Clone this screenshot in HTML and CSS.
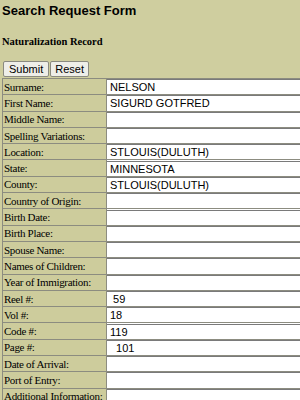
FILE: index.html
```
<!DOCTYPE html>
<html lang="en">
<head>
    <meta charset="UTF-8">
    <title>Search Request Form</title>
    <link rel="stylesheet" href="styles.css">
</head>
<body>
    <h1 class="title">Search Request Form</h1>
    <h2 class="subtitle">Naturalization Record</h2>

    <form class="request-form">
        <div class="buttons">
            <button type="submit">Submit</button>
            <button type="reset">Reset</button>
        </div>
        <table class="fields">
            <tr><td class="label">Surname:</td><td class="value"><input type="text" value="NELSON"></td></tr>
            <tr><td class="label">First Name:</td><td class="value"><input type="text" value="SIGURD GOTFRED"></td></tr>
            <tr><td class="label">Middle Name:</td><td class="value"><input type="text"></td></tr>
            <tr><td class="label">Spelling Variations:</td><td class="value"><input type="text"></td></tr>
            <tr><td class="label">Location:</td><td class="value"><input type="text" value="STLOUIS(DULUTH)"></td></tr>
            <tr><td class="label">State:</td><td class="value"><input type="text" value="MINNESOTA"></td></tr>
            <tr><td class="label">County:</td><td class="value"><input type="text" value="STLOUIS(DULUTH)"></td></tr>
            <tr><td class="label">Country of Origin:</td><td class="value"><input type="text"></td></tr>
            <tr><td class="label">Birth Date:</td><td class="value"><input type="text"></td></tr>
            <tr><td class="label">Birth Place:</td><td class="value"><input type="text"></td></tr>
            <tr><td class="label">Spouse Name:</td><td class="value"><input type="text"></td></tr>
            <tr><td class="label">Names of Children:</td><td class="value"><input type="text"></td></tr>
            <tr><td class="label">Year of Immigration:</td><td class="value"><input type="text"></td></tr>
            <tr><td class="label">Reel #:</td><td class="value"><input type="text" value=" 59"></td></tr>
            <tr><td class="label">Vol #:</td><td class="value"><input type="text" value="18"></td></tr>
            <tr><td class="label">Code #:</td><td class="value"><input type="text" value="119"></td></tr>
            <tr><td class="label">Page #:</td><td class="value"><input type="text" value="  101"></td></tr>
            <tr><td class="label">Date of Arrival:</td><td class="value"><input type="text"></td></tr>
            <tr><td class="label">Port of Entry:</td><td class="value"><input type="text"></td></tr>
            <tr><td class="label">Additional Information:</td><td class="value"><input type="text"></td></tr>
        </table>
    </form>
</body>
</html>
```

FILE: styles.css
```
body {
    margin: 0;
    padding: 3px 2px 0;
    background-color: #cfce9f;
    font-family: "Liberation Serif", serif;
    color: #000;
    overflow: hidden;
}

.title {
    font-family: "Liberation Sans", Arial, sans-serif;
    font-size: 13px;
    font-weight: bold;
    margin: 0;
    line-height: 16px;
}

.subtitle {
    font-size: 10.5px;
    font-weight: bold;
    margin: 16px 0 0;
    line-height: 14px;
}

.buttons {
    margin-top: 12px;
    padding-left: 1px;
    display: flex;
    gap: 1px;
}

.buttons button {
    font-family: "Liberation Sans", Arial, sans-serif;
    font-size: 11px;
    height: 16px;
    padding: 0 5px;
    background-color: #eeeee8;
    border: 1px solid #8a8a80;
    border-radius: 2px;
    color: #000;
}

.buttons button[type="reset"] {
    padding: 0 4px;
}

/* tabela de campos */
.fields {
    border-collapse: collapse;
    width: 310px;
    margin-top: 1px;
}

.fields td {
    border: 1px solid #8c8c80;
    padding: 0;
    height: 15.3px;
}

.fields .label {
    width: 102px;
    font-size: 11px;
    line-height: 14px;
    padding-left: 1px;
    background-color: #cdcc9c;
    white-space: nowrap;
    letter-spacing: -0.3px;
}

.fields .value {
    background-color: #fff;
}

.fields input {
    display: block;
    width: 100%;
    box-sizing: border-box;
    height: 15px;
    border: none;
    border-top: 1px solid #7a7a7a;
    padding: 0 3px;
    font-family: "Liberation Sans", Arial, sans-serif;
    font-size: 11px;
    background: #fff;
}
```
